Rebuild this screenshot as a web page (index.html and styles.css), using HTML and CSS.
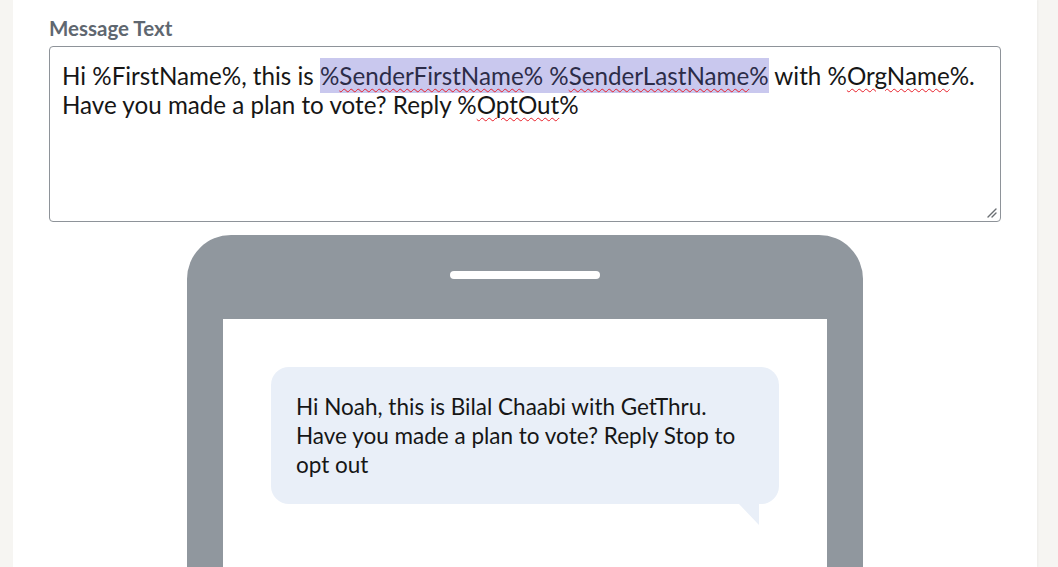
FILE: index.html
```html
<!DOCTYPE html>
<html>
<head>
<meta charset="utf-8">
<link rel="stylesheet" href="styles.css">
</head>
<body>
<div class="page">
  <div class="card">
    <div class="field">
      <div class="label">Message Text</div>
      <div class="textarea">
        <p class="msg">Hi %FirstName%, this is <span class="hl">%<span class="sp">SenderFirstName</span>% %<span class="sp">SenderLastName</span>%</span> with %<span class="sp">OrgName</span>%.<br>Have you made a plan to vote? Reply %<span class="sp">OptOut</span>%</p>
        <svg class="grip" width="12" height="12" viewBox="0 0 12 12"><path d="M2 10 L10 2 M6 10 L10 6" stroke="#6b6f73" stroke-width="1.4" stroke-linecap="round"/></svg>
      </div>
    </div>
    <div class="phone">
      <div class="speaker"></div>
      <div class="screen">
        <div class="bubble">Hi Noah, this is Bilal Chaabi with GetThru.<br>Have you made a plan to vote? Reply Stop to<br>opt out</div>
      </div>
    </div>
  </div>
</div>
</body>
</html>
```
FILE: styles.css
```css
* { box-sizing: border-box; }
html, body { margin: 0; padding: 0; height: 100%; }
body {
  background: #f6f5f2;
  font-family: "Lato", "Open Sans", sans-serif;
  color: #1d1d1f;
  overflow: hidden;
}
.page {
  padding: 0 21px 0 13px;
  height: 567px;
}
.card {
  background: #ffffff;
  height: 100%;
  padding: 16px 36px 0 36px;
  box-shadow: 1px 0 2px rgba(0,0,0,0.04);
}
.label {
  font-size: 20.5px;
  font-weight: 700;
  color: #5f6770;
  line-height: 24px;
  margin-bottom: 6px;
}
.textarea {
  position: relative;
  height: 176px;
  border: 1px solid #8e9399;
  border-radius: 4px;
  padding: 14px 12px;
  font-size: 24.2px;
  line-height: 29px;
  color: #161616;
}
.msg { margin: 0; white-space: nowrap; }
.hl {
  background: #c9c8ee;
  padding: 3px 0 3px;
  color: #2c2c48;
}
.sp {
  text-decoration: underline wavy #e8202a;
  text-decoration-thickness: 1px;
  text-underline-offset: 3px;
}
.grip {
  position: absolute;
  right: 2px;
  bottom: 2px;
}
.phone {
  width: 676px;
  margin: 13px auto 0;
  background: #90979e;
  border-radius: 44px 44px 0 0;
  padding: 36px 36px 0;
  height: 400px;
}
.speaker {
  width: 150px;
  height: 8px;
  border-radius: 4px;
  background: #ffffff;
  margin: 0 auto 40px;
}
.screen {
  background: #ffffff;
  height: 400px;
  padding: 48px;
}
.bubble {
  position: relative;
  background: #e9eff8;
  border-radius: 18px;
  padding: 25px 25px;
  font-size: 22.5px;
  line-height: 29px;
  color: #161616;
  white-space: nowrap;
}
.bubble::after {
  content: "";
  position: absolute;
  right: 20px;
  bottom: -21px;
  width: 0;
  height: 0;
  border-top: 21px solid #e9eff8;
  border-left: 20px solid transparent;
}
```
